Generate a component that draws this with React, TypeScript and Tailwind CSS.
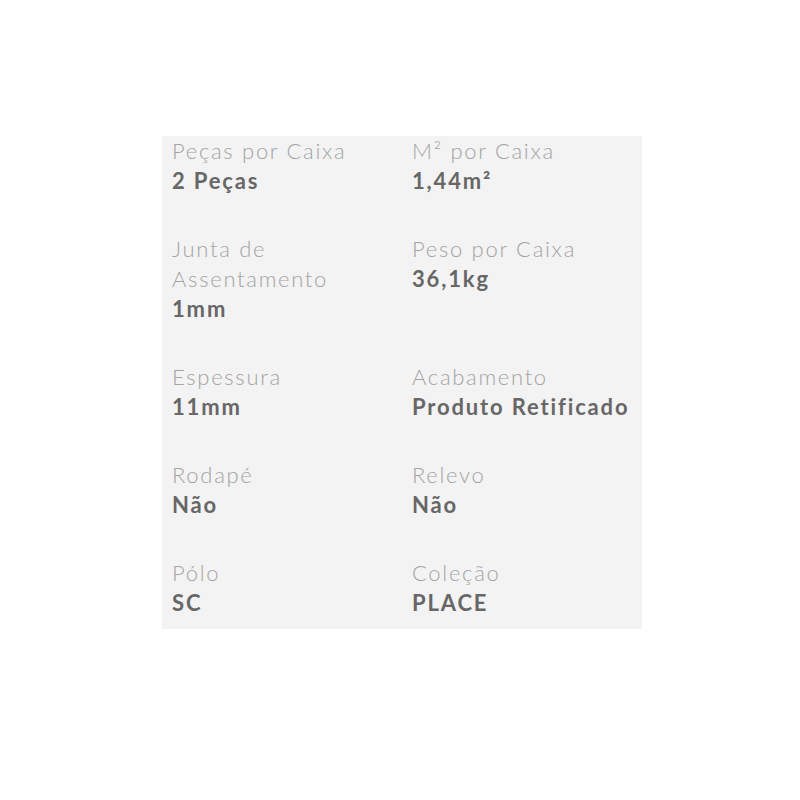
const specs: { label: string; value: string }[] = [
  { label: "Peças por Caixa", value: "2 Peças" },
  { label: "M² por Caixa", value: "1,44m²" },
  { label: "Junta de Assentamento", value: "1mm" },
  { label: "Peso por Caixa", value: "36,1kg" },
  { label: "Espessura", value: "11mm" },
  { label: "Acabamento", value: "Produto Retificado" },
  { label: "Rodapé", value: "Não" },
  { label: "Relevo", value: "Não" },
  { label: "Pólo", value: "SC" },
  { label: "Coleção", value: "PLACE" },
];

export default function App() {
  return (
    <div className="min-h-screen bg-white pt-[136px] pl-[162px] font-['Lato',sans-serif]">
      <div className="w-[480px] bg-[#f3f3f3] pb-[11px] grid grid-cols-2 gap-y-[38px]">
        {specs.map((s, i) => (
          <div key={i} className="px-[10px]">
            <div className="text-[22px] leading-[30px] font-light text-[#a3a3a3] tracking-[1.7px]">
              {s.label}
            </div>
            <div className="text-[22px] leading-[30px] font-bold text-[#676767] tracking-[1.85px]">
              {s.value}
            </div>
          </div>
        ))}
      </div>
    </div>
  );
}
